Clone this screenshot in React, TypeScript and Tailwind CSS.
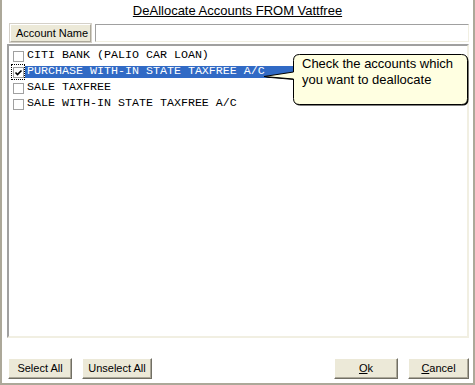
import React from "react";

interface Account {
  name: string;
  checked: boolean;
  selected: boolean;
}

const accounts: Account[] = [
  { name: "CITI BANK (PALIO CAR LOAN)", checked: false, selected: false },
  { name: "PURCHASE WITH-IN STATE TAXFREE A/C", checked: true, selected: true },
  { name: "SALE TAXFREE", checked: false, selected: false },
  { name: "SALE WITH-IN STATE TAXFREE A/C", checked: false, selected: false },
];

function Check({ on }: { on: boolean }) {
  return (
    <span className="w-[11px] h-[11px] border border-[#a0a0a0] bg-white flex items-center justify-center shrink-0">
      {on && (
        <svg width="9" height="9" viewBox="0 0 9 9">
          <path d="M1.5 4.5 L3.5 6.5 L7.5 2.5" fill="none" stroke="#000" strokeWidth={1.6} />
        </svg>
      )}
    </span>
  );
}

function Row({ item }: { item: Account }) {
  return (
    <div className="flex items-center h-4">
      <div
        className={
          item.selected
            ? "w-[14px] h-4 flex items-center justify-center border border-dotted border-black ml-px"
            : "w-[14px] h-4 flex items-center justify-center ml-px"
        }
      >
        <Check on={item.checked} />
      </div>
      <div
        className={
          item.selected
            ? "flex-1 h-[12px] flex items-center pl-[2px] bg-[#316ac5] text-white"
            : "flex-1 h-[12px] flex items-center pl-[2px] text-black"
        }
      >
        <span className="whitespace-pre">{item.name}</span>
      </div>
    </div>
  );
}

function XpButton({ children, w }: { children: React.ReactNode; w: string }) {
  return (
    <button
      className={`${w} h-[21px] bg-[#ece9d8] border border-t-white border-l-white border-r-[#716f64] border-b-[#716f64] shadow-[inset_-1px_-1px_0_#aca899] text-[11px] text-black leading-none`}
    >
      {children}
    </button>
  );
}

function Callout() {
  const shape =
    "M37.5 2.5 H199.5 Q205.5 2.5 205.5 8.5 V46.5 Q205.5 52.5 199.5 52.5 H37.5 Q31.5 52.5 31.5 46.5 V27 L2 24.5 L31.5 20 V8.5 Q31.5 2.5 37.5 2.5 Z";
  return (
    <div className="absolute left-[260px] top-[52px] w-[210px] h-[56px]">
      <svg width="210" height="56" className="absolute inset-0">
        <path d={shape} transform="translate(1 1)" fill="#000" />
        <path d={shape} fill="#ffffe1" stroke="#000" strokeWidth={1} />
      </svg>
      <div className="absolute left-[40px] top-[4px] text-[13px] leading-[16px] text-black font-['Liberation_Sans',Arial,sans-serif]">
        Check the accounts which
        <br />
        you want to deallocate
      </div>
    </div>
  );
}

export default function App() {
  return (
    <div className="relative w-[475px] h-[385px] bg-white border-x-2 border-b-2 border-[#aca899] flex flex-col font-['Liberation_Sans',Arial,sans-serif]">
      <div className="h-6 pt-[3px] text-center text-[13px] leading-[15px] text-black">
        <span className="underline">DeAllocate Accounts FROM Vattfree</span>
      </div>

      <div className="flex h-[18px] ml-[8px] mr-[4px] gap-[4px]">
        <div className="w-[81px] bg-[#ece9d8] border border-t-white border-l-white border-r-[#aca899] border-b-[#aca899] shadow-[0_0_0_1px_#d4d0c8] flex items-center pl-[5px] text-[11px] text-black">
          Account Name
        </div>
        <div className="flex-1 bg-white border border-t-[#a0a0a0] border-l-[#a0a0a0] border-r-[#f1efe2] border-b-[#f1efe2]" />
      </div>

      <div className="mt-[2px] ml-[5px] mr-[4px] h-[294px] border-2 border-t-[#a0a0a0] border-l-[#a0a0a0] border-r-[#f1efe2] border-b-[#f1efe2] bg-white pt-[2px] pl-[1px] font-['Liberation_Mono','Courier_New',monospace] text-[11.67px]">
        {accounts.map((a) => (
          <Row key={a.name} item={a} />
        ))}
      </div>

      <div className="flex mt-[20px] ml-[6px] mr-[4px]">
        <XpButton w="w-[64px]">Select All</XpButton>
        <div className="w-[10px]" />
        <XpButton w="w-[70px]">Unselect All</XpButton>
        <div className="ml-auto" />
        <XpButton w="w-[64px]">
          <span className="underline">O</span>k
        </XpButton>
        <div className="w-[10px]" />
        <XpButton w="w-[61px]">
          <span className="underline">C</span>ancel
        </XpButton>
      </div>

      <Callout />
    </div>
  );
}
